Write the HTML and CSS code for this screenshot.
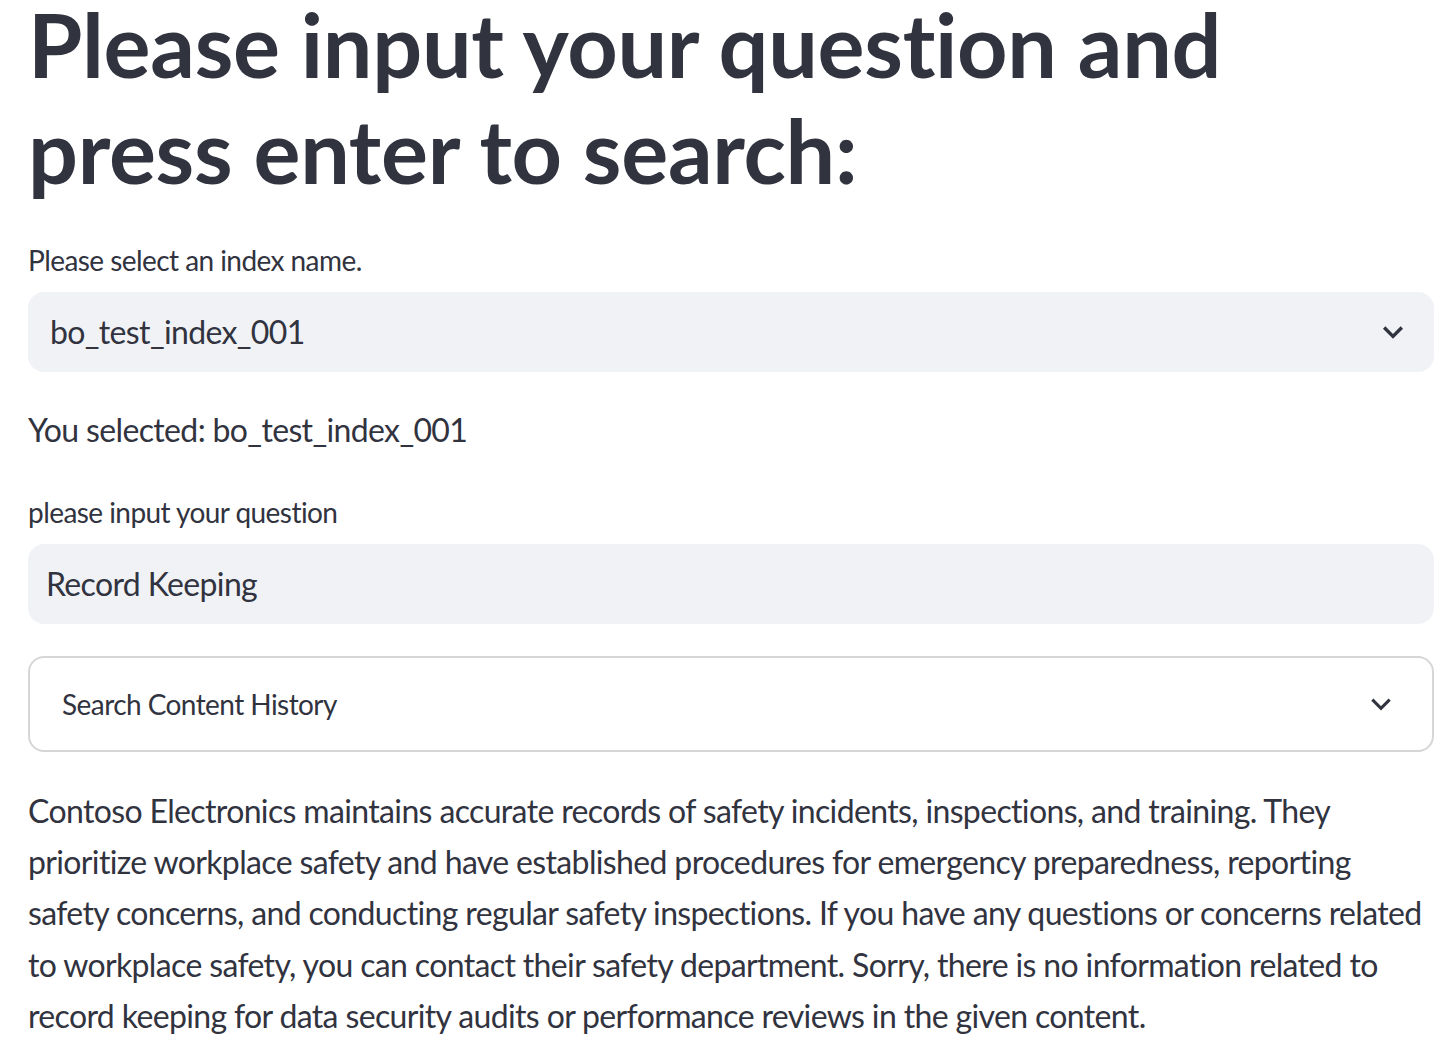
FILE: index.html
```html
<!DOCTYPE html>
<html lang="en">
<head>
<meta charset="utf-8">
<title>Search</title>
<link rel="stylesheet" href="styles.css">
</head>
<body>
<main class="main">
  <h1 class="title">Please input your question and press enter to search:</h1>

  <div class="field">
    <label class="label">Please select an index name.</label>
    <div class="select">
      <span class="select-value">bo_test_index_001</span>
      <svg class="chev" width="40" height="40" viewBox="0 0 24 24" aria-hidden="true"><path d="M16.59 8.59L12 13.17 7.41 8.59 6 10l6 6 6-6z" fill="#31333F"/></svg>
    </div>
  </div>

  <p class="text">You selected: bo_test_index_001</p>

  <div class="field">
    <label class="label">please input your question</label>
    <div class="input">Record Keeping</div>
  </div>

  <div class="expander">
    <span class="exp-title">Search Content History</span>
    <svg class="exp-chev" width="26" height="26" viewBox="0 0 24 24" aria-hidden="true"><polyline points="4,8 12,16 20,8" fill="none" stroke="#31333F" stroke-width="2.8"/></svg>
  </div>

  <p class="text">Contoso Electronics maintains accurate records of safety incidents, inspections, and training. They prioritize workplace safety and have established procedures for emergency preparedness, reporting safety concerns, and conducting regular safety inspections. If you have any questions or concerns related to workplace safety, you can contact their safety department. Sorry, there is no information related to record keeping for data security audits or performance reviews in the given content.</p>
</main>
</body>
</html>
```

FILE: styles.css
```css
html, body {
  margin: 0;
  padding: 0;
  background: #ffffff;
}
body {
  font-family: "Lato", "Noto Sans", sans-serif;
  color: #31333F;
  font-variant-ligatures: none;
}
.main {
  display: flex;
  flex-direction: column;
  gap: 32.5px;
  padding: 0 20px 0 28px;
  margin-top: -8px;
}
.title {
  margin: 0;
  font-size: 88px;
  line-height: 105.6px;
  font-weight: 700;
  letter-spacing: -0.3px;
}
.field {
  display: flex;
  flex-direction: column;
}
.label {
  height: 48px;
  margin-bottom: 8px;
  display: flex;
  align-items: center;
  font-size: 28px;
  letter-spacing: -0.02em;
}
.select {
  height: 80px;
  border-radius: 16px;
  background: #F0F2F6;
  display: flex;
  align-items: center;
  justify-content: space-between;
  padding: 0 21px 0 22px;
  font-size: 32px;
  letter-spacing: -0.02em;
}
.input {
  height: 80px;
  border-radius: 16px;
  background: #F0F2F6;
  display: flex;
  align-items: center;
  padding: 0 18px;
  font-size: 32px;
  letter-spacing: -0.02em;
}
.text {
  margin: 0;
  font-size: 32px;
  line-height: 51.2px;
  letter-spacing: -0.02em;
}
.expander {
  height: 96px;
  box-sizing: border-box;
  border: 2px solid rgba(49, 51, 63, 0.2);
  border-radius: 16px;
  display: flex;
  align-items: center;
  justify-content: space-between;
  padding: 0 38px 0 32px;
  font-size: 28px;
  letter-spacing: -0.02em;
}
```
